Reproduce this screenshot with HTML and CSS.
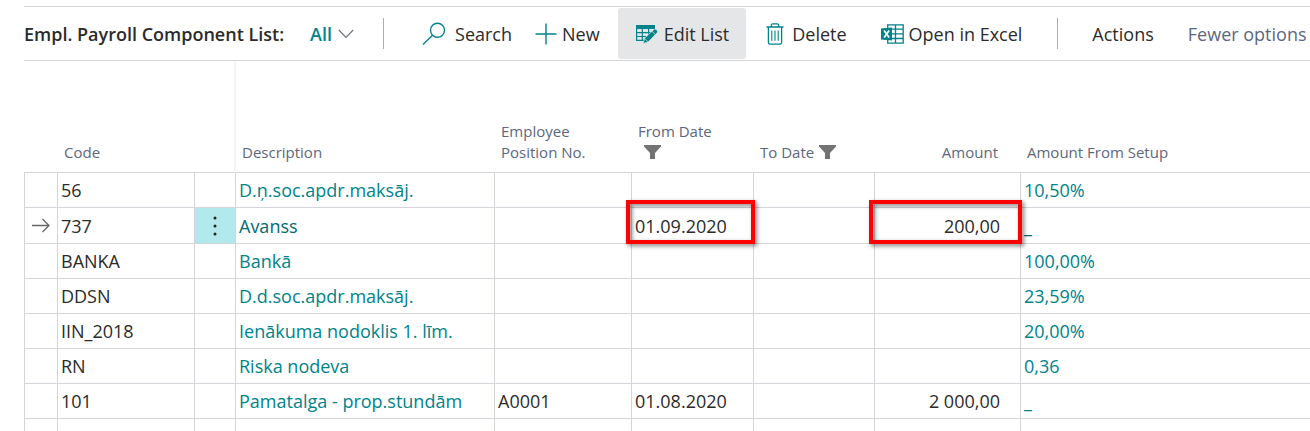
FILE: index.html
```html
<!DOCTYPE html>
<html lang="en">
<head>
<meta charset="utf-8">
<title>Empl. Payroll Component List</title>
<link rel="stylesheet" href="styles.css">
</head>
<body>
<main class="page">
  <header class="toolbar">
    <h1 class="title">Empl. Payroll Component List:</h1>
    <button class="view" type="button">All
      <svg class="chevron" width="16" height="10" viewBox="0 0 16 10" fill="none" stroke="#6b7078" stroke-width="1.1"><path d="M.8 1 8 8.5 15.2 1"/></svg>
    </button>
    <span class="separator"></span>
    <nav class="actions">
      <button class="action search" type="button">
        <svg width="24" height="24" viewBox="0 0 24 24" fill="none" stroke="#00838b" stroke-width="1.4"><circle cx="15.5" cy="8.3" r="7"/><path d="M10.5 13.3 1 22.5"/></svg>
        Search
      </button>
      <button class="action new" type="button">
        <svg width="22" height="22" viewBox="0 0 22 22" fill="none" stroke="#00838b" stroke-width="1.4"><path d="M11 .5v21M.5 11h21"/></svg>
        New
      </button>
      <button class="action edit" type="button">
        <svg width="22" height="20" viewBox="0 0 22 20"><path fill="#00838b" d="M0 1h19v4H0z"/><path fill="none" stroke="#00838b" stroke-width="1.2" d="M.6 4v12.4h8M6.3 4v12.4M12.6 4v7M.6 8.6h14.5M.6 12.5h11M18.4 4v2"/><path fill="#00838b" stroke="#e5e6e8" stroke-width=".7" d="m7.2 19.5 1.3-5.2 9.2-8.6c1-.9 2.3-.6 3.1.2s1 2.1.1 3.1l-8.7 9z"/><path stroke="#e5e6e8" stroke-width=".8" d="m16 7.2 3.6 3.7M8.6 14.3l3.5 3.6"/></svg>
        Edit List
      </button>
      <button class="action delete" type="button">
        <svg width="18" height="22" viewBox="0 0 18 22" fill="none" stroke="#00838b" stroke-width="1.3"><path d="M.5 4h17M5.4 4V2q0-1.2 1.2-1.2h4.8q1.2 0 1.2 1.2v2M2.4 4v15.5q0 1.7 1.7 1.7h9.8q1.7 0 1.7-1.7V4"/><path stroke-width="1.1" d="M5.8 7.5v10.2M9 7.5v10.2M12.2 7.5v10.2"/></svg>
        Delete
      </button>
      <button class="action excel" type="button">
        <svg width="23" height="20" viewBox="0 0 23 20"><path fill="none" stroke="#00838b" stroke-width="1.3" d="M6.7 4V.8h15.5v18.4H6.7V16M14.5.8v18.4M11 5.2h11M11 9.9h11M11 14.5h11"/><path fill="#00838b" d="M0 4.5 11 3.5v13L0 15.5z"/><path stroke="#fff" stroke-width="1.8" d="m3.1 6.5 5 7M8.1 6.5l-5 7"/></svg>
        Open in Excel
      </button>
    </nav>
    <span class="separator"></span>
    <button class="menu" type="button">Actions</button>
    <button class="menu muted" type="button">Fewer options</button>
  </header>

  <table class="list">
    <colgroup>
      <col class="c-mark"><col class="c-code"><col class="c-more"><col class="c-desc"><col class="c-pos"><col class="c-from"><col class="c-to"><col class="c-amount"><col>
    </colgroup>
    <thead>
      <tr>
        <th></th>
        <th>Code</th>
        <th class="freeze"></th>
        <th class="frozen">Description</th>
        <th>Employee Position No.</th>
        <th>From Date <svg class="filter below" width="17" height="14" viewBox="0 0 17 14" fill="#737373"><path d="M0 0h17v1.5L11 8v6H6V8L0 1.5z"/></svg></th>
        <th>To Date <svg class="filter" width="17" height="14" viewBox="0 0 17 14" fill="#737373"><path d="M0 0h17v1.5L11 8v6H6V8L0 1.5z"/></svg></th>
        <th class="num">Amount</th>
        <th>Amount From Setup</th>
      </tr>
    </thead>
    <tbody>
      <tr><td></td><td>56</td><td></td><td><a href="#">D.ņ.soc.apdr.maksāj.</a></td><td></td><td></td><td></td><td class="num"></td><td><a href="#">10,50%</a></td></tr>
      <tr class="current">
        <td class="mark"><svg width="18" height="15" viewBox="0 0 18 15" fill="none" stroke="#666" stroke-width="1.3"><path d="M0 7.5h17M10.5 1l6.5 6.5-6.5 6.5"/></svg></td>
        <td>737</td>
        <td class="more"><button class="dots" type="button" aria-label="Show more options"><svg width="4" height="20" viewBox="0 0 4 20" fill="#222"><circle cx="2" cy="2" r="1.5"/><circle cx="2" cy="10" r="1.5"/><circle cx="2" cy="18" r="1.5"/></svg></button></td>
        <td><a href="#">Avanss</a></td>
        <td></td>
        <td class="marked">01.09.2020<span class="callout"></span></td>
        <td></td>
        <td class="num marked">200,00<span class="callout"></span></td>
        <td><a href="#">_</a></td>
      </tr>
      <tr><td></td><td>BANKA</td><td></td><td><a href="#">Bankā</a></td><td></td><td></td><td></td><td class="num"></td><td><a href="#">100,00%</a></td></tr>
      <tr><td></td><td>DDSN</td><td></td><td><a href="#">D.d.soc.apdr.maksāj.</a></td><td></td><td></td><td></td><td class="num"></td><td><a href="#">23,59%</a></td></tr>
      <tr><td></td><td>IIN_2018</td><td></td><td><a href="#">Ienākuma nodoklis 1. līm.</a></td><td></td><td></td><td></td><td class="num"></td><td><a href="#">20,00%</a></td></tr>
      <tr><td></td><td>RN</td><td></td><td><a href="#">Riska nodeva</a></td><td></td><td></td><td></td><td class="num"></td><td><a href="#">0,36</a></td></tr>
      <tr><td></td><td>101</td><td></td><td><a href="#">Pamatalga - prop.stundām</a></td><td>A0001</td><td>01.08.2020</td><td></td><td class="num">2 000,00</td><td><a href="#">_</a></td></tr>
      <tr><td></td><td></td><td></td><td></td><td></td><td></td><td></td><td></td><td></td></tr>
    </tbody>
  </table>
</main>
</body>
</html>
```
FILE: styles.css
```css
* { box-sizing: border-box; }
body {
  margin: 0;
  background: #fff;
  color: #2b2b2b;
  font: 18px/24px "Open Sans", "Noto Sans", sans-serif;
}
.page {
  height: 100vh;
  overflow: hidden;
  padding: 6px 0 0 24px;
}
button {
  border: 0;
  padding: 0;
  background: none;
  color: inherit;
  font: inherit;
  white-space: nowrap;
}
svg { flex: none; }

.toolbar {
  display: flex;
  align-items: center;
  height: 55px;
  border-top: 1px solid #d2d4d9;
  border-bottom: 1px solid #d2d4d9;
}
.title {
  margin: 0 26px 0 0;
  font-size: 18px;
  font-weight: 600;
  white-space: nowrap;
}
.view {
  display: flex;
  align-items: center;
  gap: 6px;
  color: #00838b;
  font-weight: 600;
}
.separator {
  flex: none;
  width: 1px;
  height: 31px;
  margin-left: 29px;
  background: #a9adb8;
}
.actions {
  display: flex;
  align-items: center;
  margin: 0 6px 0 38px;
}
.action {
  display: flex;
  align-items: center;
  height: 51px;
  gap: 5px;
}
.search { gap: 9px; margin-right: 23px; }
.edit {
  gap: 6px;
  margin: 0 20px 0 18px;
  padding: 0 17px 0 18px;
  border-radius: 3px;
  background: #e5e6e8;
}
.delete { gap: 8px; margin-right: 34px; }
.menu { margin-left: 34px; }
.muted { color: #5c677d; }

.list {
  width: 100%;
  table-layout: fixed;
  border-spacing: 0;
}
.c-mark { width: 33px; }
.c-code { width: 137px; }
.c-more { width: 41px; }
.c-desc { width: 259px; }
.c-pos { width: 137px; }
.c-from { width: 122px; }
.c-to { width: 121px; }
.c-amount { width: 146px; }
th {
  height: 112px;
  padding: 0 7px 9px;
  border-bottom: 1px solid #d2d4d9;
  color: #5c677d;
  font-size: 15px;
  font-weight: 400;
  line-height: 21px;
  text-align: left;
  vertical-align: bottom;
}
.freeze { border-right: 1px solid #f3f3f5; }
.frozen { padding-left: 6px; border-left: 1px solid #f3f3f5; }
.filter { margin-left: 1px; vertical-align: -1px; }
.below { display: block; margin: 3px 0 4px 6px; }
th.num { padding-right: 22px; }
td {
  height: 35px;
  padding: 0 3px;
  border-left: 1px solid #d2d4d9;
  border-bottom: 1px solid #d2d4d9;
  white-space: nowrap;
}
.current td { height: 36px; }
.num { text-align: right; }
td.num { padding-right: 20px; }
a { color: #00838b; text-decoration: none; }
.current a { color: #006b70; }
td.mark { padding: 0 0 0 7px; }
.mark svg { display: block; }
td.more { padding: 0; background: #b2e9ec; }
.dots {
  display: flex;
  align-items: center;
  justify-content: center;
  width: 100%;
  height: 35px;
}
.marked { position: relative; }
.callout {
  position: absolute;
  inset: -8px -2px -1px -6px;
  border: 4px solid #f00;
  filter: drop-shadow(2px 2px 2px rgba(0, 0, 0, .5));
  pointer-events: none;
}
```
